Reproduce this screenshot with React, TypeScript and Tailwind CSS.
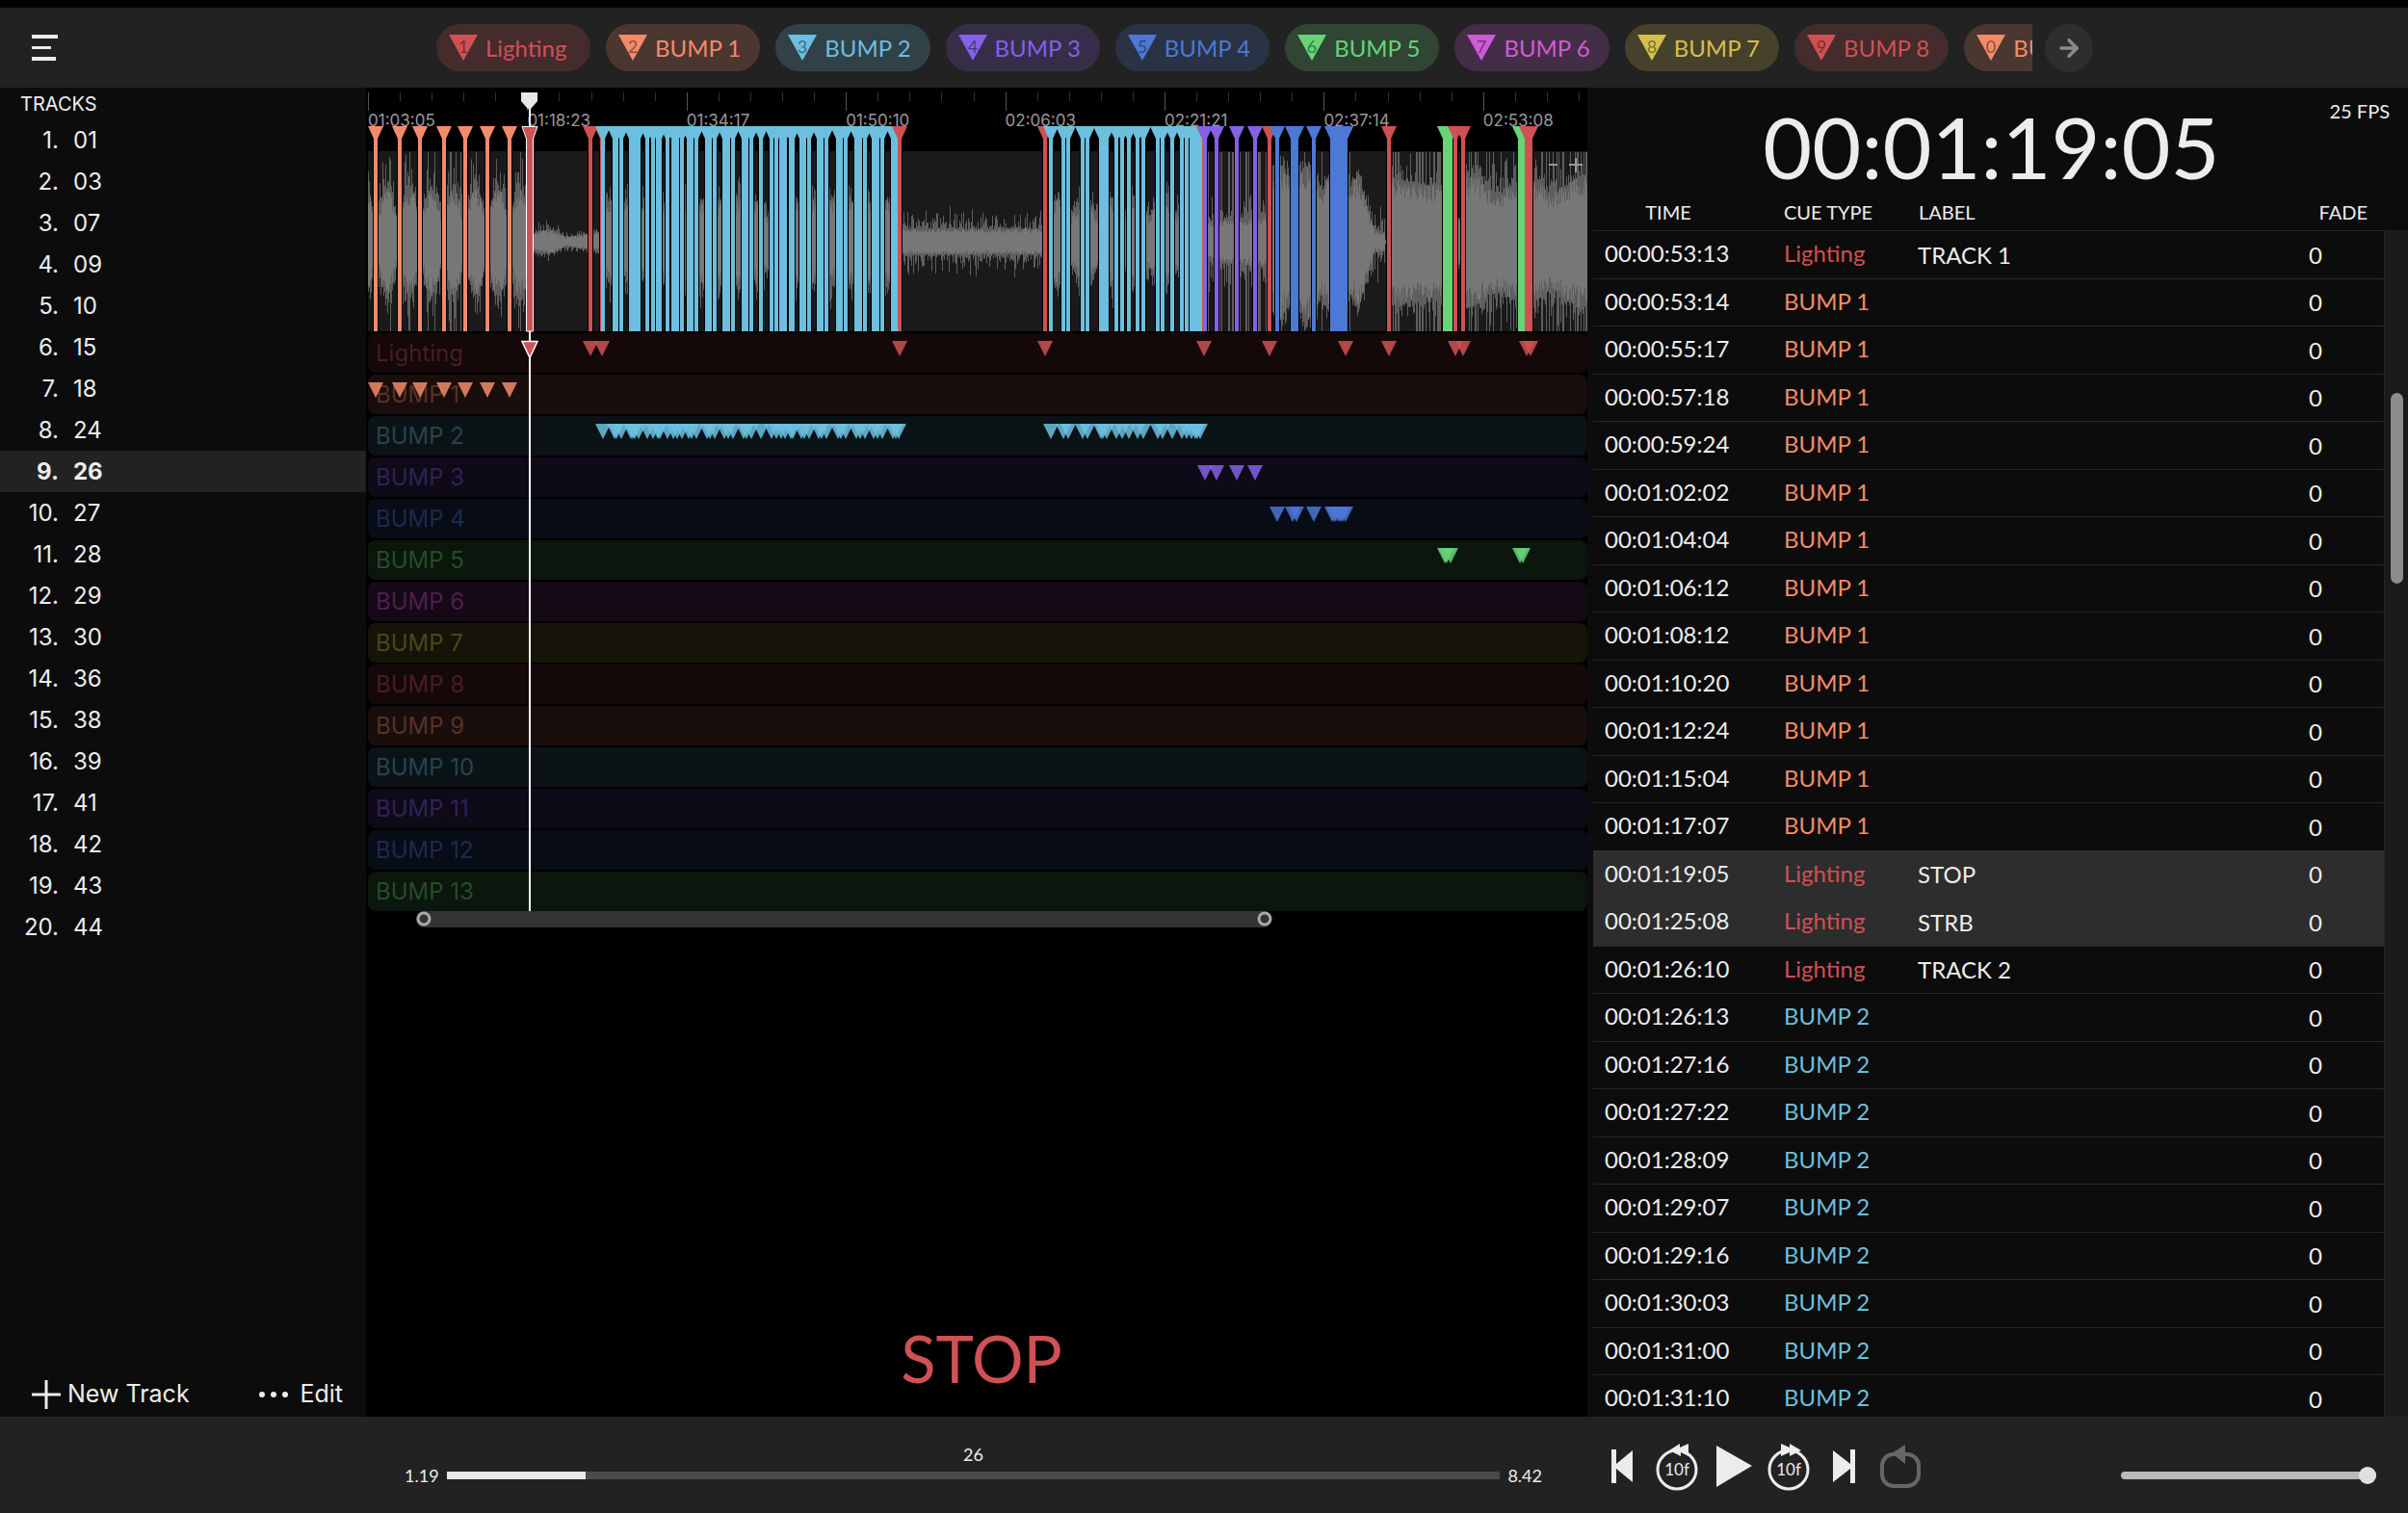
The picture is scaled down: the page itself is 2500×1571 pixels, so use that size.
import { ArrowRight } from "lucide-react";

type Color = "red" | "orange" | "cyan" | "purple" | "blue" | "green" | "magenta" | "yellow";

const hex: Record<Color, string> = {
  red: "#cf5154",
  orange: "#f38b6b",
  cyan: "#6cbfdf",
  purple: "#8560e8",
  blue: "#4c78d6",
  green: "#68d478",
  magenta: "#cf5bd9",
  yellow: "#d6c04d",
};

const textColor: Record<Color, string> = {
  red: "text-[#cf5154]",
  orange: "text-[#f38b6b]",
  cyan: "text-[#6cbfdf]",
  purple: "text-[#8560e8]",
  blue: "text-[#4c78d6]",
  green: "text-[#68d478]",
  magenta: "text-[#cf5bd9]",
  yellow: "text-[#d6c04d]",
};

const chipColor: Record<Color, string> = {
  red: "bg-[#cf5154]/20",
  orange: "bg-[#f38b6b]/20",
  cyan: "bg-[#6cbfdf]/20",
  purple: "bg-[#8560e8]/20",
  blue: "bg-[#4c78d6]/20",
  green: "bg-[#68d478]/20",
  magenta: "bg-[#cf5bd9]/20",
  yellow: "bg-[#d6c04d]/20",
};

const laneColor: Record<Color, string> = {
  red: "bg-[#cf5154]/10 text-[#cf5154]/30",
  orange: "bg-[#f38b6b]/10 text-[#f38b6b]/30",
  cyan: "bg-[#6cbfdf]/10 text-[#6cbfdf]/30",
  purple: "bg-[#8560e8]/10 text-[#8560e8]/30",
  blue: "bg-[#4c78d6]/10 text-[#4c78d6]/30",
  green: "bg-[#68d478]/10 text-[#68d478]/30",
  magenta: "bg-[#cf5bd9]/10 text-[#cf5bd9]/30",
  yellow: "bg-[#d6c04d]/10 text-[#d6c04d]/30",
};

const palette: Color[] = ["red", "orange", "cyan", "purple", "blue", "green", "magenta", "yellow"];

const cueTypes = Array.from({ length: 14 }, (_, i) => ({
  name: i === 0 ? "Lighting" : `BUMP ${i}`,
  color: palette[i % palette.length],
}));

const tracks = [
  "01", "03", "07", "09", "10", "15", "18", "24", "26", "27",
  "28", "29", "30", "36", "38", "39", "41", "42", "43", "44",
];

// marker positions per lane, in timeline pixels
const markers: number[][] = [
  [168, 231, 243, 552, 703, 868, 936, 1015, 1060, 1129, 1137, 1203, 1207],
  [8, 33, 54, 79, 101, 124, 147],
  [
    244, 256, 258, 263, 273, 275, 277, 281, 290, 296, 301, 303, 311, 317, 321, 326, 333, 336, 341,
    352, 355, 360, 370, 374, 379, 390, 393, 398, 408, 419, 424, 429, 433, 439, 441, 450, 453, 458,
    468, 471, 476, 488, 491, 496, 507, 511, 516, 525, 529, 534, 545, 548, 551, 709, 722, 727, 742,
    747, 761, 763, 767, 777, 783, 790, 799, 805, 820, 825, 835, 845, 850, 855, 859, 861, 864,
  ],
  [869, 881, 902, 921],
  [944, 960, 964, 982, 1001, 1003, 1005, 1008, 1010, 1012, 1015],
  [1118, 1120, 1124, 1196, 1199],
];

const allMarkers = markers
  .flatMap((xs, lane) => xs.map((x) => ({ x, color: hex[cueTypes[lane].color] })))
  .sort((a, b) => a.x - b.x);

const PLAYHEAD = 168;

const rulerLabels = [
  "01:03:05", "01:18:23", "01:34:17", "01:50:10", "02:06:03", "02:21:21", "02:37:14", "02:53:08",
];

type Cue = { time: string; type: number; label?: string; selected?: boolean };

const cues: Cue[] = [
  { time: "00:00:53:13", type: 0, label: "TRACK 1" },
  ...[
    "00:00:53:14", "00:00:55:17", "00:00:57:18", "00:00:59:24", "00:01:02:02", "00:01:04:04",
    "00:01:06:12", "00:01:08:12", "00:01:10:20", "00:01:12:24", "00:01:15:04", "00:01:17:07",
  ].map((time) => ({ time, type: 1 })),
  { time: "00:01:19:05", type: 0, label: "STOP", selected: true },
  { time: "00:01:25:08", type: 0, label: "STRB", selected: true },
  { time: "00:01:26:10", type: 0, label: "TRACK 2" },
  ...[
    "00:01:26:13", "00:01:27:16", "00:01:27:22", "00:01:28:09", "00:01:29:07", "00:01:29:16",
    "00:01:30:03", "00:01:31:00", "00:01:31:10",
  ].map((time) => ({ time, type: 2 })),
];

function makeRandom(seed: number) {
  let s = seed;
  return () => {
    s = (s * 1664525 + 1013904223) % 4294967296;
    return s / 4294967296;
  };
}

// [core, peak, chance of a full height spike] of the audio at x
function envelope(x: number): [number, number, number] {
  if (x < 165) {
    const p = Math.pow(Math.abs(Math.sin(((x - 8) / 23) * Math.PI)), 0.9);
    return [14 + 40 * p, 20 + 74 * p, 0.06 * p];
  }
  if (x < 170) return [8, 12, 0];
  if (x < 243) {
    const p = x < 205 ? Math.sin(((x - 165) / 40) * Math.PI) : (x - 200) / 60;
    return [4 + 8 * p, 8 + 14 * p, 0];
  }
  if (x < 552) {
    const p = Math.abs(Math.sin(((x - 243) / 19) * Math.PI));
    return [26 + 16 * p, 36 + 30 * p, 0];
  }
  if (x < 703) return [13, 32, 0];
  if (x < 868) {
    const p = Math.abs(Math.sin(((x - 703) / 27) * Math.PI));
    return [24 + 20 * p, 38 + 30 * p, 0];
  }
  if (x < 936) return [20 + (x - 868) / 10, 48, 0.36];
  if (x < 1027) {
    const p = Math.abs(Math.sin(((x - 936) / 30) * Math.PI + 0.6));
    return [52 + 26 * p, 68 + 26 * p, 0.06];
  }
  if (x < 1045) return [72 - (x - 1027) * 3.5, 82 - (x - 1027) * 3.2, 0];
  if (x < 1056) return [10, 38, 0];
  if (x < 1060) return [2, 4, 0];
  if (x < 1129) return [66 - (x - 1060) / 5, 92 - (x - 1060) / 4, 0.34];
  if (x < 1138) return [24, 34, 0];
  return [58 + 8 * Math.sin(x / 9), 84, 0.28];
}

function buildWave() {
  const rand = makeRandom(26);
  let core = "";
  let peak = "";
  for (let x = 0; x < 1267; x++) {
    const [c, p, spike] = envelope(x);
    const up = c * (0.7 + rand() * 0.35);
    const down = c * (0.7 + rand() * 0.35);
    core += `M${x + 0.5} ${94 - up}V${94 + down}`;
    const full = rand() < spike;
    const top = full ? 93 : Math.max(up, c + (p - c) * rand() * rand() * 1.4);
    const bottom = full ? 93 : Math.max(down, c + (p - c) * rand() * rand() * 1.4);
    peak += `M${x + 0.5} ${94 - Math.min(93, top)}V${94 + Math.min(93, bottom)}`;
  }
  return { core, peak };
}

const wave = buildWave();

function Chip({ index }: { index: number }) {
  const { name, color } = cueTypes[index];
  return (
    <button
      className={`flex h-[49px] min-w-[160px] shrink-0 items-center gap-2 rounded-full pl-[13px] pr-5 text-[24px] ${chipColor[color]} ${textColor[color]}`}
    >
      <svg width="30" height="27" viewBox="0 0 30 27" aria-hidden="true">
        <path d="M0 0H30L15 27Z" fill={hex[color]} />
        <text x="15" y="19" textAnchor="middle" fontSize="18" fill="#000" fillOpacity="0.45">
          {(index + 1) % 10}
        </text>
      </svg>
      {name}
    </button>
  );
}

function TopBar() {
  return (
    <header className="flex h-[83px] shrink-0 items-center bg-[#222] pl-[33px] pr-[327px]">
      <button aria-label="Menu" className="shrink-0">
        <svg width="27" height="27" viewBox="0 0 27 27" fill="#ececec">
          <path d="M0 0H27V4H0ZM0 12H20V15H0ZM0 23H25V27H0Z" />
        </svg>
      </button>
      <nav className="ml-[393px] flex min-w-0 flex-1 gap-4 overflow-hidden">
        {cueTypes.slice(0, 10).map((c, i) => (
          <Chip key={c.name} index={i} />
        ))}
      </nav>
      <button
        aria-label="More cue types"
        className="ml-[13px] flex size-[50px] shrink-0 items-center justify-center rounded-full bg-[#2e2e2e] text-[#8a8a8a]"
      >
        <ArrowRight size={28} strokeWidth={3} />
      </button>
    </header>
  );
}

function TrackList() {
  return (
    <aside className="flex w-[380px] shrink-0 flex-col bg-[#0c0c0c] font-['Inter',sans-serif]">
      <h2 className="h-[33px] pl-[21px] text-[20px] leading-[34px]">TRACKS</h2>
      <ol>
        {tracks.map((t, i) => (
          <li key={t}>
            <button
              className={`flex h-[43px] w-full items-center gap-[15px] text-[24px] ${
                i === 8 ? "bg-[#222] font-bold" : ""
              }`}
            >
              <span className="w-[61px] text-right">{i + 1}.</span>
              <span>{t}</span>
            </button>
          </li>
        ))}
      </ol>
      <div className="mt-auto flex items-center justify-between pb-[7px] pl-[33px] pr-6 text-[25px]">
        <button className="flex h-8 items-center gap-[7px]">
          <svg width="30" height="30" viewBox="0 0 30 30" stroke="#ececec" strokeWidth="3">
            <path d="M15 0V30M0 15H30" />
          </svg>
          New Track
        </button>
        <button className="flex h-8 items-center gap-3">
          <svg width="30" height="6" viewBox="0 0 30 6" fill="#ececec">
            <circle cx="3" cy="3" r="3" />
            <circle cx="15" cy="3" r="3" />
            <circle cx="27" cy="3" r="3" />
          </svg>
          Edit
        </button>
      </div>
    </aside>
  );
}

function Timeline() {
  return (
    <div className="relative font-['Inter',sans-serif]">
      <svg className="block h-[255px] w-full" aria-label="Waveform">
        {Array.from({ length: 39 }, (_, i) => (
          <path
            key={i}
            d={`M${Math.round(i * 33.08) + 0.5} 5V${i % 5 ? 14 : 24}`}
            stroke={i % 5 ? "#333" : "#555"}
          />
        ))}
        {rulerLabels.map((l, i) => (
          <text key={l} x={i * 165.4} y="40" fontSize="17" fill="#999">
            {l}
          </text>
        ))}
        <rect y="66" width="100%" height="187" fill="#1a1a1a" />
        <g transform="translate(0 66)">
          <path d={wave.peak} stroke="#5e5e5e" />
          <path d={wave.core} stroke="#777" />
        </g>
        <path d="M1226 80H1235M1247 80H1261M1254 73V88" stroke="#999" strokeWidth="2" />
        {allMarkers.map((m, i) => (
          <rect key={i} x={m.x - 3} y="52" width="6" height="201" fill="#000" />
        ))}
        {allMarkers.map((m, i) => (
          <path
            key={i}
            d={`M${m.x - 8} 40H${m.x + 8}L${m.x + 2} 53V253H${m.x - 2}V53Z`}
            fill={m.color}
          />
        ))}
        <path
          d={`M${PLAYHEAD - 8} 40.5H${PLAYHEAD + 8}L${PLAYHEAD + 3.5} 53V253H${PLAYHEAD - 3.5}V53Z`}
          fill={hex.red}
          stroke="#fff"
        />
      </svg>

      <ul className="flex flex-col gap-[2px]">
        {cueTypes.map((c) => (
          <li
            key={c.name}
            className={`h-[41px] rounded-lg pl-2 text-[24px] leading-[41px] ${laneColor[c.color]}`}
          >
            {c.name}
          </li>
        ))}
      </ul>

      <svg className="pointer-events-none absolute inset-0 h-full w-full" aria-hidden="true">
        {markers.map((xs, lane) =>
          xs.map((x, i) => (
            <path
              key={`${lane}-${i}`}
              d={`M${x - 8} ${263 + lane * 43}h16l-8 16Z`}
              fill={hex[cueTypes[lane].color]}
              fillOpacity="0.85"
            />
          ))
        )}
        <path d={`M${PLAYHEAD} 20V41M${PLAYHEAD} 253V855`} stroke="#fff" strokeWidth="2" />
        <path d={`M${PLAYHEAD - 8} 263.5h16l-8 17Z`} fill={hex.red} stroke="#fff" strokeWidth="1.5" />
        <path d={`M${PLAYHEAD - 9} 5h17v9l-7 8h-3l-7 -8Z`} fill="#e8e8e8" />
      </svg>
    </div>
  );
}

function Center() {
  return (
    <main className="ml-[2px] flex min-w-0 flex-1 flex-col bg-black">
      <Timeline />
      <svg className="block h-[17px] w-full" aria-label="Visible range">
        <rect x="50" y="0" width="888" height="17" rx="8" fill="#333" />
        <circle cx="58" cy="8" r="6" fill="#333" stroke="#aaa" strokeWidth="3" />
        <circle cx="931" cy="8" r="6" fill="#333" stroke="#aaa" strokeWidth="3" />
      </svg>
      <p className="mt-auto pb-5 pl-2 text-center text-[67px] leading-[82px] text-[#cf5154]">STOP</p>
    </main>
  );
}

function CueList() {
  return (
    <section className="flex w-[852px] shrink-0 flex-col bg-[#0c0c0c] pl-[6px]">
      <div className="grid h-[104px] grid-cols-[1fr_auto_1fr] pr-[19px]">
        <span />
        <span className="text-[88px] leading-[122px]">00:01:19:05</span>
        <span className="pt-[10px] text-right text-[20px] leading-7">25 FPS</span>
      </div>
      <div className="flex min-h-0 flex-1">
        <div className="min-w-0 flex-1 overflow-hidden">
          <table className="w-full table-fixed border-collapse">
            <thead>
              <tr className="h-[44px] text-left text-[20px]">
                <th className="w-[156px] pt-[6px] text-center font-normal">TIME</th>
                <th className="w-[181px] pl-[42px] pt-[6px] font-normal">CUE TYPE</th>
                <th className="pl-px pt-[6px] font-normal">LABEL</th>
                <th className="w-[85px] pr-[17px] pt-[6px] text-right font-normal">FADE</th>
              </tr>
            </thead>
            <tbody>
              {cues.map((cue) => (
                <tr
                  key={cue.time}
                  className={`border-t text-[24px] leading-8 odd:h-[50px] even:h-[49px] ${
                    cue.selected ? "border-[#2d2d2d] bg-[#2d2d2d]" : "border-[#262626]"
                  }`}
                >
                  <td className="pb-[2px] pl-3">{cue.time}</td>
                  <td className={`pb-[2px] pl-[42px] ${textColor[cueTypes[cue.type].color]}`}>
                    {cueTypes[cue.type].name}
                  </td>
                  <td className="pt-px">{cue.label}</td>
                  <td className="pl-[7px] pt-px">0</td>
                </tr>
              ))}
            </tbody>
          </table>
        </div>
        <div className="mt-[44px] w-[25px] border-l border-[#262626] bg-[#1a1a1a] pl-[6px] pt-[169px]">
          <div className="h-[198px] w-[13px] rounded-full bg-[#8c8c8c]" />
        </div>
      </div>
    </section>
  );
}

function Transport() {
  return (
    <div className="flex w-[852px] shrink-0 items-center pl-[25px] pr-[33px] pt-[3px]">
      <button aria-label="Previous cue">
        <svg width="22" height="35" viewBox="0 0 22 35" fill="#ececec">
          <path d="M0 0H5V15L22 1V34L5 20V35H0Z" />
        </svg>
      </button>
      <button aria-label="Back 10 frames" className="ml-6">
        <svg width="44" height="50" viewBox="0 0 44 50" fill="#ececec">
          <circle cx="22" cy="28" r="20" fill="none" stroke="#ececec" strokeWidth="3" />
          <path d="M14 8L25 1V5L34 1V14L26 10V14Z" />
          <text x="22" y="34" textAnchor="middle" fontSize="17">10f</text>
        </svg>
      </button>
      <button aria-label="Play" className="ml-[19px]">
        <svg width="37" height="43" viewBox="0 0 37 43" fill="#ececec">
          <path d="M0 0L37 21L0 43Z" />
        </svg>
      </button>
      <button aria-label="Forward 10 frames" className="ml-4">
        <svg width="44" height="50" viewBox="0 0 44 50" fill="#ececec">
          <circle cx="22" cy="28" r="20" fill="none" stroke="#ececec" strokeWidth="3" />
          <path d="M14 1L23 5V1L35 8L23 14V10L14 14Z" />
          <text x="22" y="34" textAnchor="middle" fontSize="17">10f</text>
        </svg>
      </button>
      <button aria-label="Next cue" className="ml-6">
        <svg width="23" height="35" viewBox="0 0 23 35" fill="#ececec">
          <path d="M0 1L18 15V0H23V35H18V20L0 34Z" />
        </svg>
      </button>
      <button aria-label="Loop" className="ml-[26px]">
        <svg width="42" height="46" viewBox="0 0 42 46">
          <rect x="2" y="10" width="38" height="33" rx="12" fill="none" stroke="#666" strokeWidth="4" />
          <path d="M12 9L26 0V20Z" fill="#666" />
        </svg>
      </button>
      <input
        type="range"
        aria-label="Volume"
        defaultValue={100}
        className="ml-auto mt-[18px] h-[18px] w-[265px] appearance-none bg-transparent [&::-webkit-slider-runnable-track]:h-2 [&::-webkit-slider-runnable-track]:rounded-full [&::-webkit-slider-runnable-track]:bg-[#bababa] [&::-webkit-slider-thumb]:-mt-[5px] [&::-webkit-slider-thumb]:size-[18px] [&::-webkit-slider-thumb]:appearance-none [&::-webkit-slider-thumb]:rounded-full [&::-webkit-slider-thumb]:bg-[#e0e0e0]"
      />
    </div>
  );
}

function Footer() {
  const elapsed = (144 / 1094) * 100;
  return (
    <footer className="flex h-[100px] shrink-0 bg-[#222]">
      <div className="flex flex-1 flex-col pl-[420px] pr-[47px] pt-[27px] text-[18px]">
        <p className="text-center leading-6">26</p>
        <div className="flex items-center gap-2 leading-5">
          <span>1.19</span>
          <input
            type="range"
            aria-label="Position"
            defaultValue={elapsed}
            className="h-2 min-w-0 flex-1 appearance-none [&::-webkit-slider-thumb]:opacity-0"
            style={{ background: `linear-gradient(to right, #e8e8e8 ${elapsed}%, #4a4a4a ${elapsed}%)` }}
          />
          <span>8.42</span>
        </div>
      </div>
      <Transport />
    </footer>
  );
}

export default function App() {
  return (
    <div className="flex h-screen flex-col overflow-hidden bg-black pt-2 font-['Lato',sans-serif] text-[#ececec]">
      <TopBar />
      <div className="flex min-h-0 flex-1">
        <TrackList />
        <Center />
        <CueList />
      </div>
      <Footer />
    </div>
  );
}
